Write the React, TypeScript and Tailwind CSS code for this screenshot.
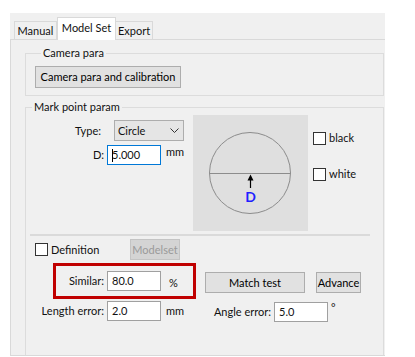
import React from 'react';

const Checkbox: React.FC<{ label: string }> = ({ label }) => (
  <div className="flex items-center gap-[3px]">
    <span className="w-[13px] h-[13px] border border-[#333333] bg-white" />
    <span>{label}</span>
  </div>
);

const Input: React.FC<{ value: string; focused?: boolean }> = ({ value, focused }) => (
  <div
    className={
      focused
        ? 'relative w-[54px] h-[20px] bg-white border border-[#0078d7] pl-[4px] flex items-center'
        : 'relative w-[54px] h-[20px] bg-white border border-[#a0a0a0] pl-[4px] flex items-center'
    }
  >
    {focused && <span className="absolute left-[4px] top-[3px] w-px h-[13px] bg-black" />}
    <span>{value}</span>
  </div>
);

const Button: React.FC<{ label: string; className: string; disabled?: boolean }> = ({ label, className, disabled }) => (
  <div
    className={
      (disabled
        ? 'bg-[#d4d4d4] border-[#c4c4c4] text-[#9a9a9a] '
        : 'bg-[#e1e1e1] border-[#adadad] text-black ') +
      'border flex items-center justify-center ' +
      className
    }
  >
    {label}
  </div>
);

const Preview: React.FC = () => (
  <div className="w-[115px] h-[116px] bg-[#dfdfdf]">
    <svg width="115" height="116" viewBox="0 0 115 116">
      <circle cx="57" cy="58" r="40.5" fill="none" stroke="#8c8c8c" strokeWidth="1" />
      <line x1="16.5" y1="58.5" x2="97.5" y2="58.5" stroke="#8c8c8c" strokeWidth="1" />
      <line x1="57.5" y1="64" x2="57.5" y2="73" stroke="#000" strokeWidth="1.2" />
      <polygon points="57.5,59.5 54.5,65.5 60.5,65.5" fill="#000" />
      <text x="57.5" y="87" textAnchor="middle" fill="#1f1fff" fontSize="14" fontWeight="700" fontFamily="Lato, sans-serif">
        D
      </text>
    </svg>
  </div>
);

export default function App() {
  return (
    <div
      className="w-[415px] h-[357px] bg-white pt-[13px] pl-[10px] text-[11px] leading-[14px] text-[#111]"
      style={{ fontFamily: 'Lato, "Liberation Sans", sans-serif' }}
    >
      <div className="w-[375px] h-[343px] bg-[#f0f0f0] flex flex-col overflow-hidden">
        {/* tabs */}
        <div className="h-[26px] flex items-end pl-[4px] relative z-10">
          <div className="w-[43px] h-[18px] border border-b-0 border-[#d9d9d9] flex items-center justify-center">Manual</div>
          <div className="w-[59px] h-[23px] -mb-px bg-white border border-b-0 border-[#d9d9d9] flex items-center justify-center pb-[3px]">
            Model Set
          </div>
          <div className="w-[37px] h-[18px] border border-b-0 border-l-0 border-[#d9d9d9] flex items-center justify-center">Export</div>
        </div>

        {/* panel */}
        <div className="flex-1 min-h-0 overflow-hidden border-t border-l border-b border-[#d9d9d9] pl-[14px] pt-[5px]">
          <fieldset className="w-[359px] border border-[#dcdcdc] pb-[7px] pl-[9px]">
            <legend className="ml-[6px] px-[2px] leading-[16px]">Camera para</legend>
            <Button label="Camera para and calibration" className="w-[146px] h-[22px] mt-[5px]" />
          </fieldset>

          <fieldset className="w-[359px] h-[330px] mt-[3px] border border-[#dcdcdc]">
            <legend className="ml-[6px] px-[2px] leading-[16px]">Mark point param</legend>

            <div className="flex">
              <div className="w-[167px] flex flex-col">
                <div className="flex items-center mt-[5px]">
                  <span className="w-[75px] text-right">Type:</span>
                  <div className="ml-[13px] w-[70px] h-[21px] bg-[#e5e5e5] border border-[#adadad] flex items-center justify-between pl-[3px] pr-[4px]">
                    <span>Circle</span>
                    <svg width="9" height="6" viewBox="0 0 9 6">
                      <path d="M0.5 0.5 L4.5 4.5 L8.5 0.5" fill="none" stroke="#333" strokeWidth="1" />
                    </svg>
                  </div>
                </div>
                <div className="flex items-center mt-[4px]">
                  <span className="w-[78px] text-right">D:</span>
                  <div className="ml-[3px]">
                    <Input value="5.000" focused />
                  </div>
                  <span className="ml-[5px] self-start">mm</span>
                </div>
              </div>

              <Preview />

              <div className="ml-[5px] flex flex-col">
                <div className="mt-[16px]">
                  <Checkbox label="black" />
                </div>
                <div className="mt-[22px]">
                  <Checkbox label="white" />
                </div>
              </div>
            </div>

            <div className="ml-[4px] mt-[3px] w-[340px] h-[2px] bg-[#dadada]" />

            <div className="flex items-center mt-[3px] ml-[9px]">
              <div className="w-[95px]">
                <Checkbox label="Definition" />
              </div>
              <Button label="Modelset" disabled className="w-[50px] h-[21px]" />
            </div>

            <div className="flex mt-[3px]">
              <div className="ml-[27px] w-[143px] h-[36px] border-[3px] border-[#c00000] flex items-start pt-[5px]">
                <span className="w-[48px] text-right mt-[3px]">Similar:</span>
                <div className="ml-[3px]">
                  <Input value="80.0" />
                </div>
                <span className="ml-[8px] mt-[5px]">%</span>
              </div>
              <Button label="Match test" className="ml-[9px] mt-[9px] w-[100px] h-[21px]" />
              <Button label="Advance" className="ml-[11px] mt-[9px] w-[45px] h-[21px]" />
            </div>

            <div className="flex items-start mt-[2px]">
              <div className="w-[179px] flex items-start">
                <span className="w-[78px] text-right mt-[3px]">Length error:</span>
                <div className="ml-[3px]">
                  <Input value="2.0" />
                </div>
                <span className="ml-[5px] mt-[3px]">mm</span>
              </div>
              <div className="flex items-start mt-px">
                <span className="w-[66px] text-right mt-[3px]">Angle error:</span>
                <div className="ml-[3px]">
                  <Input value="5.0" />
                </div>
                <span className="ml-[3px] -mt-[1px]">°</span>
              </div>
            </div>
          </fieldset>
        </div>
      </div>
    </div>
  );
}
